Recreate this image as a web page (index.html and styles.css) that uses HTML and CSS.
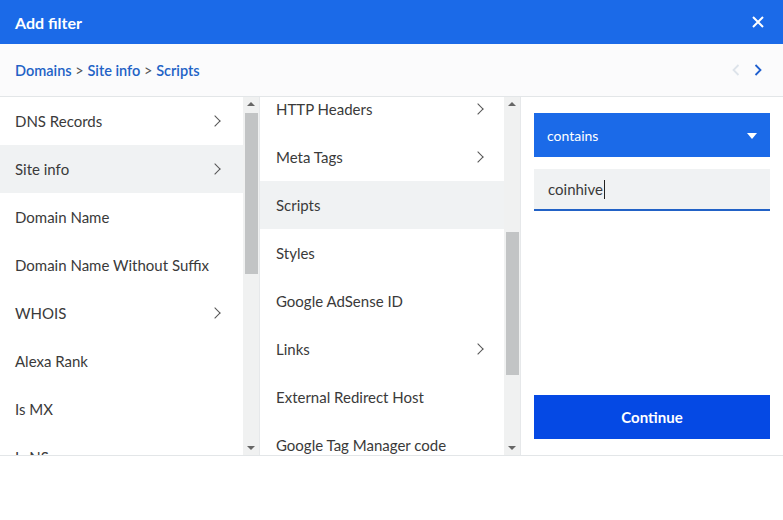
FILE: index.html
```html
<!DOCTYPE html>
<html>
<head>
<meta charset="utf-8">
<link rel="stylesheet" href="styles.css">
</head>
<body>
<div class="dialog">
  <header class="head">
    <span class="title">Add filter</span>
    <svg class="close" width="12" height="12" viewBox="0 0 12 12"><path d="M1 1L11 11M11 1L1 11" stroke="#fff" stroke-width="2"/></svg>
  </header>
  <div class="crumbs">
    <div class="path"><a>Domains</a> &gt; <a>Site info</a> &gt; <a>Scripts</a></div>
    <div class="nav">
      <svg width="8" height="12" viewBox="0 0 8 12"><path d="M6.5 1L1.5 6L6.5 11" fill="none" stroke="#dde3ea" stroke-width="1.8"/></svg>
      <svg width="8" height="12" viewBox="0 0 8 12"><path d="M1.5 1L6.5 6L1.5 11" fill="none" stroke="#1f5fcf" stroke-width="1.8"/></svg>
    </div>
  </div>
  <div class="body">
    <div class="col">
      <ul class="list">
        <li>DNS Records<i class="chev"></i></li>
        <li class="sel">Site info<i class="chev"></i></li>
        <li>Domain Name</li>
        <li>Domain Name Without Suffix</li>
        <li>WHOIS<i class="chev"></i></li>
        <li>Alexa Rank</li>
        <li>Is MX</li>
        <li>Is NS</li>
      </ul>
      <div class="bar">
        <span class="up"></span>
        <div class="track"><div class="thumb t1"></div></div>
        <span class="down"></span>
      </div>
    </div>
    <div class="col">
      <ul class="list shift">
        <li>HTTP Headers<i class="chev"></i></li>
        <li>Meta Tags<i class="chev"></i></li>
        <li class="sel">Scripts</li>
        <li>Styles</li>
        <li>Google AdSense ID</li>
        <li>Links<i class="chev"></i></li>
        <li>External Redirect Host</li>
        <li>Google Tag Manager code</li>
      </ul>
      <div class="bar">
        <span class="up"></span>
        <div class="track"><div class="thumb t2"></div></div>
        <span class="down"></span>
      </div>
    </div>
    <div class="panel">
      <div class="select">contains<span class="caret"></span></div>
      <div class="input">coinhive<span class="cursor"></span></div>
      <button class="go">Continue</button>
    </div>
  </div>
</div>
</body>
</html>
```
FILE: styles.css
```css
* { box-sizing: border-box; }
html, body { margin: 0; padding: 0; }
body {
  width: 783px; height: 520px; background: #fff; overflow: hidden;
  font-family: "Source Sans Pro", Lato, "Noto Sans", sans-serif;
  color: #3a3a3a;
}
.head {
  height: 44px; background: #1b6ae8; color: #fff;
  display: flex; align-items: center; justify-content: space-between;
  padding: 0 19px 0 15px;
}
.title { font-weight: 700; font-size: 16px; }
.crumbs {
  height: 53px; background: #fbfbfc; border-bottom: 1px solid #e3e6e8;
  display: flex; align-items: center; justify-content: space-between;
  padding: 0 21px 0 15px; font-size: 14.5px; color: #555;
}
.path a { color: #2262c6; font-weight: 600; }
.nav { display: flex; gap: 14px; align-items: center; }
.body { display: flex; height: 359px; border-bottom: 1px solid #e3e6e8; }
.col { display: flex; width: 260px; overflow: hidden; }
.col + .col { width: 261px; }
.list { list-style: none; margin: 0; padding: 0; flex: 1; overflow: hidden; }
.list.shift { margin-top: -12px; }
.list li {
  height: 48px; flex-shrink: 0; display: flex; align-items: center; justify-content: space-between;
  padding: 0 22px 0 15px; font-size: 15px; color: #3a3a3a;
}
.col + .col .list li { padding-left: 16px; padding-right: 20px; }
.list li.sel { background: #f0f2f3; }
.chev {
  width: 8px; height: 8px; border-right: 1.6px solid #555; border-top: 1.6px solid #555;
  transform: rotate(45deg); margin-right: 2px;
}
.bar {
  width: 17px; background: #f0f1f1; display: flex; flex-direction: column; align-items: center;
  border-right: 1px solid #e6e8ea;
}
.up, .down { height: 14px; width: 16px; display: flex; align-items: center; justify-content: center; }
.up::before { content: ""; border: 4px solid transparent; border-bottom: 4px solid #666; border-top: 0; }
.down::before { content: ""; border: 4px solid transparent; border-top: 4px solid #666; border-bottom: 0; }
.track { flex: 1; width: 100%; display: flex; flex-direction: column; align-items: center; }
.thumb { width: 13px; background: #c2c4c5; }
.t1 { margin-top: 2px; height: 161px; }
.t2 { margin-top: 121px; height: 143px; }
.panel {
  flex: 1; display: flex; flex-direction: column; padding: 16px 13px 16px 13px;
}
.select {
  height: 44px; background: #1b6ae8; color: #fff; font-size: 14px;
  display: flex; align-items: center; justify-content: space-between; padding: 0 13px 0 13px;
}
.caret { border: 5px solid transparent; border-top: 6px solid #fff; border-bottom: 0; margin-top: 1px; }
.input {
  margin-top: 12px; height: 42px; background: #f0f2f3; border-bottom: 2px solid #2262c6;
  display: flex; align-items: center; padding-left: 14px; font-size: 15px; color: #3a3a3a;
}
.cursor { width: 1px; height: 19px; background: #222; margin-left: 1px; }
.go {
  margin-top: auto; height: 44px; border: 0; background: #0549e4; color: #fff;
  font-family: inherit; font-weight: 700; font-size: 15px;
}
```
